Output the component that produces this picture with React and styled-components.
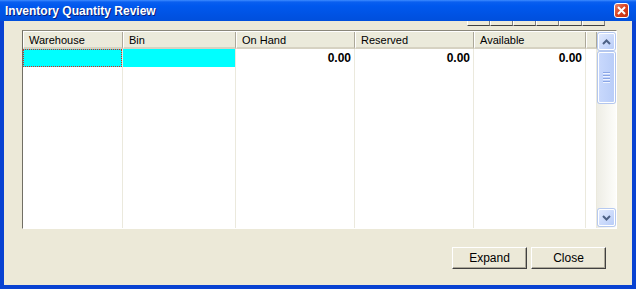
import React from 'react'
import styled, { createGlobalStyle } from 'styled-components'

const Global = createGlobalStyle`
  body { margin: 0; font-family: "Liberation Sans", Arial, sans-serif; background: #fff; }
`

const Window = styled.div`
  width: 636px;
  height: 289px;
  box-sizing: border-box;
  display: flex;
  flex-direction: column;
  background: #ece9d8;
  border-left: 4px solid #0842d2;
  border-right: 4px solid #0842d2;
  border-bottom: 4px solid #0842d2;
`

const TitleBar = styled.div`
  height: 21px;
  margin: 0 -4px;
  padding: 0 7px 0 5px;
  display: flex;
  align-items: center;
  justify-content: space-between;
  background: linear-gradient(#3d8cff 0, #0a5ff0 2px, #0058ee 6px, #0054e6 60%, #004fdc 100%);
`

const Title = styled.span`
  color: #fff;
  font-weight: bold;
  font-size: 12px;
  text-shadow: 1px 1px #0a1f7a;
`

const CloseBtn = styled.div`
  width: 13px;
  height: 13px;
  border: 1px solid #fff;
  border-radius: 3px;
  background: linear-gradient(135deg, #e9846a, #d9401f 50%, #c3300f);
  display: flex;
  align-items: center;
  justify-content: center;
`

const Content = styled.div`
  flex: 1;
  display: flex;
  flex-direction: column;
  padding: 0 15px 0 18px;
`

const TabStrip = styled.div`
  display: flex;
  justify-content: flex-end;
  padding-right: 12px;
  height: 5px;
  margin-bottom: 4px;
`

const Tab = styled.div`
  width: 21px;
  height: 4px;
  background: #ece9d8;
  border-left: 1px solid #fff;
  border-bottom: 1px solid #404040;
  border-right: 1px solid #808080;
`

const Grid = styled.div`
  height: 199px;
  box-sizing: border-box;
  display: flex;
  border-top: 1px solid #8a877a;
  border-left: 1px solid #716f64;
  border-right: 1px solid #fff;
  border-bottom: 1px solid #fff;
  padding-top: 1px;
  background: #fff;
`

const ListArea = styled.div`
  flex: 1;
  display: flex;
  flex-direction: column;
`

const cols = '100px 113px 119px 119px 112px 1fr'

const HeaderRow = styled.div`
  display: grid;
  grid-template-columns: ${cols};
  height: 17px;
`

const HeaderCell = styled.div`
  background: #ebeadb;
  border-left: 1px solid #fff;
  border-right: 1px solid #aca899;
  border-bottom: 2px solid #d6d2c2;
  box-sizing: border-box;
  font-size: 11px;
  color: #000;
  padding: 2px 0 0 5px;
  line-height: 12px;
`

const Body = styled.div`
  flex: 1;
  display: grid;
  grid-template-columns: ${cols};
`

const Column = styled.div`
  border-right: 1px solid #ebe9dd;
`

const Cell = styled.div`
  height: 18px;
  box-sizing: border-box;
  background: ${p => (p.$selected ? '#00ffff' : '#fff')};
  outline: ${p => (p.$focus ? '1px dotted #e0201a' : 'none')};
  outline-offset: -1px;
  font-size: 12px;
  font-weight: bold;
  text-align: right;
  padding: 3px 3px 0 0;
  line-height: 12px;
`

const ScrollBar = styled.div`
  width: 17px;
  display: flex;
  flex-direction: column;
  gap: 1px;
  padding: 1px 1px 2px 1px;
  background: linear-gradient(90deg, #eeede5, #fdfdfa);
`

const ArrowBtn = styled.div`
  height: 15px;
  border: 1px solid #fff;
  border-radius: 2px;
  background: linear-gradient(135deg, #e1eafe, #b9cdf8);
  box-shadow: 0 0 0 1px #b6c9f0;
  display: flex;
  align-items: center;
  justify-content: center;
`

const Thumb = styled.div`
  height: 49px;
  border: 1px solid #fff;
  border-radius: 2px;
  margin-top: 1px;
  background: linear-gradient(90deg, #c8d8fc, #b9cdf8);
  box-shadow: 0 0 0 1px #b3c6ee;
  display: flex;
  flex-direction: column;
  align-items: center;
  justify-content: center;
  gap: 1px;
`

const Grip = styled.div`
  width: 7px;
  height: 1px;
  background: #8aa6e6;
  border-bottom: 1px solid #eef3ff;
`

const Track = styled.div`
  flex: 1;
`

const ButtonRow = styled.div`
  display: flex;
  justify-content: flex-end;
  gap: 4px;
  margin-top: 18px;
  padding-right: 11px;
`

const Button = styled.div`
  width: 75px;
  height: 22px;
  box-sizing: border-box;
  background: #ece9d8;
  border: 1px solid;
  border-color: #fff #404040 #404040 #fff;
  box-shadow: inset -1px -1px #aca899;
  font-size: 12px;
  display: flex;
  align-items: center;
  justify-content: center;
`

const Chevron = ({ up }) => (
  <svg width="9" height="6" viewBox="0 0 9 6">
    <path d={up ? 'M1 5 L4.5 1.5 L8 5' : 'M1 1 L4.5 4.5 L8 1'} fill="none" stroke="#4d6185" strokeWidth="2" />
  </svg>
)

const headers = ['Warehouse', 'Bin', 'On Hand', 'Reserved', 'Available', '']
const row = [
  { text: '', selected: true, focus: true },
  { text: '', selected: true },
  { text: '0.00' },
  { text: '0.00' },
  { text: '0.00' },
  { text: '' },
]

export default function App() {
  return (
    <>
      <Global />
      <Window>
        <TitleBar>
          <Title>Inventory Quantity Review</Title>
          <CloseBtn>
            <svg width="9" height="9" viewBox="0 0 9 9">
              <path d="M1 1 L8 8 M8 1 L1 8" stroke="#fff" strokeWidth="2" />
            </svg>
          </CloseBtn>
        </TitleBar>
        <Content>
          <TabStrip>
            {[0, 1, 2, 3, 4, 5].map(i => <Tab key={i} />)}
          </TabStrip>
          <Grid>
            <ListArea>
              <HeaderRow>
                {headers.map((h, i) => <HeaderCell key={i}>{h}</HeaderCell>)}
              </HeaderRow>
              <Body>
                {row.map((c, i) => (
                  <Column key={i}>
                    <Cell $selected={c.selected} $focus={c.focus}>{c.text}</Cell>
                  </Column>
                ))}
              </Body>
            </ListArea>
            <ScrollBar>
              <ArrowBtn><Chevron up /></ArrowBtn>
              <Thumb>
                <Grip /><Grip /><Grip /><Grip />
              </Thumb>
              <Track />
              <ArrowBtn><Chevron /></ArrowBtn>
            </ScrollBar>
          </Grid>
          <ButtonRow>
            <Button>Expand</Button>
            <Button>Close</Button>
          </ButtonRow>
        </Content>
      </Window>
    </>
  )
}
